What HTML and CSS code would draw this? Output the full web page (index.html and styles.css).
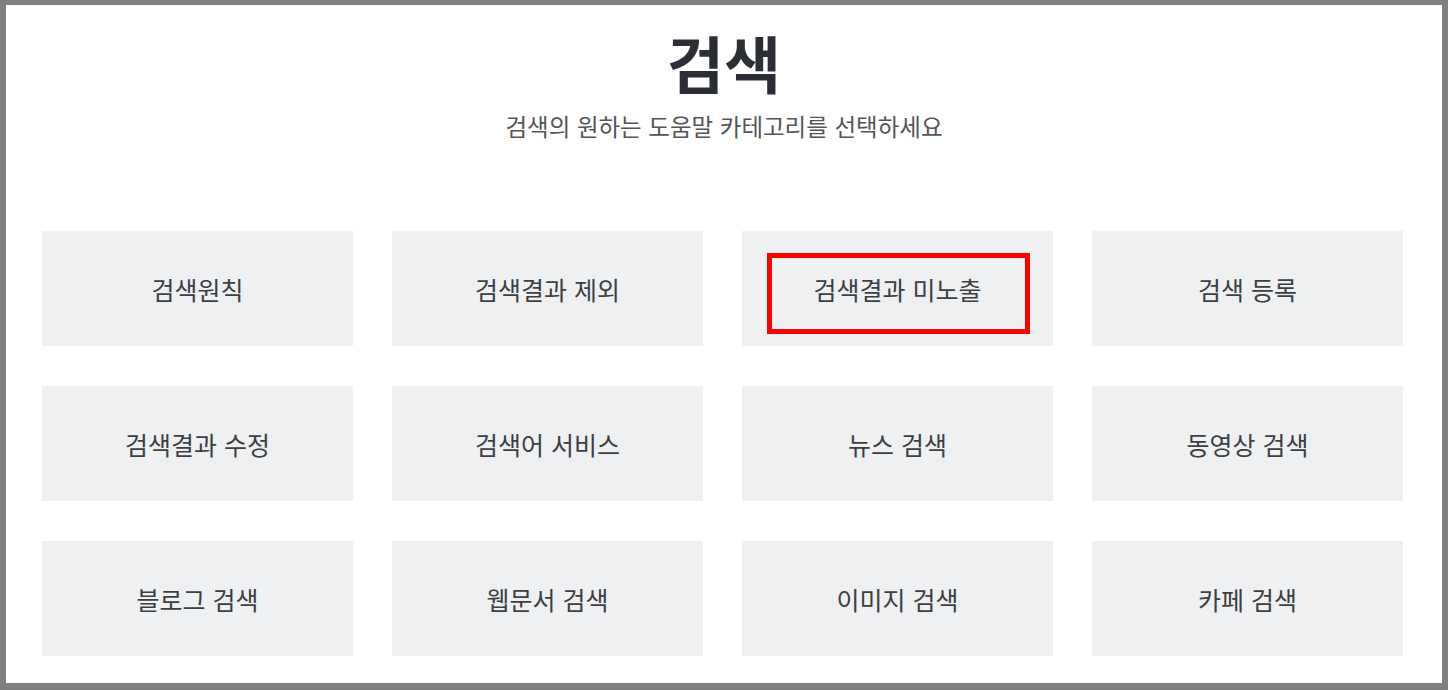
FILE: index.html
```html
<!DOCTYPE html>
<html lang="ko">
<head>
<meta charset="utf-8">
<title>검색</title>
<link rel="stylesheet" href="styles.css">
</head>
<body>
<div class="frame">
  <header class="head">
    <h1 class="title">검색</h1>
    <p class="subtitle">검색의 원하는 도움말 카테고리를 선택하세요</p>
  </header>
  <div class="grid">
    <a class="card">검색원칙</a>
    <a class="card">검색결과 제외</a>
    <a class="card">검색결과 미노출<span class="highlight"></span></a>
    <a class="card">검색 등록</a>
    <a class="card">검색결과 수정</a>
    <a class="card">검색어 서비스</a>
    <a class="card">뉴스 검색</a>
    <a class="card">동영상 검색</a>
    <a class="card">블로그 검색</a>
    <a class="card">웹문서 검색</a>
    <a class="card">이미지 검색</a>
    <a class="card">카페 검색</a>
  </div>
</div>
</body>
</html>
```

FILE: styles.css
```css
* { box-sizing: border-box; }
html, body { margin: 0; padding: 0; background: #ffffff; }
body { font-family: "Noto Sans CJK KR", "Noto Sans", sans-serif; }
.frame {
  width: 1448px;
  height: 690px;
  border-style: solid;
  border-color: #7f7f7f;
  border-width: 5px 6px 7px 6px;
  background: #ffffff;
  overflow: hidden;
}
.head {
  display: flex;
  flex-direction: column;
  align-items: center;
  padding-top: 22px;
}
.title {
  margin: 0;
  font-size: 62px;
  line-height: 70px;
  font-weight: 700;
  color: #2b2e34;
}
.subtitle {
  margin: 14px 0 0;
  font-size: 23.5px;
  line-height: 30px;
  font-weight: 400;
  color: #555555;
}
.grid {
  display: grid;
  grid-template-columns: repeat(4, 311px);
  grid-auto-rows: 115px;
  column-gap: 39px;
  row-gap: 40px;
  margin: 90px 0 0 36px;
}
.card {
  position: relative;
  display: flex;
  align-items: center;
  justify-content: center;
  background: #eef0f2;
  color: #3d3f43;
  font-size: 25px;
  text-decoration: none;
}
.highlight {
  position: absolute;
  left: 25px;
  top: 22px;
  width: 263px;
  height: 81px;
  border: 5px solid #ff0000;
}
```
